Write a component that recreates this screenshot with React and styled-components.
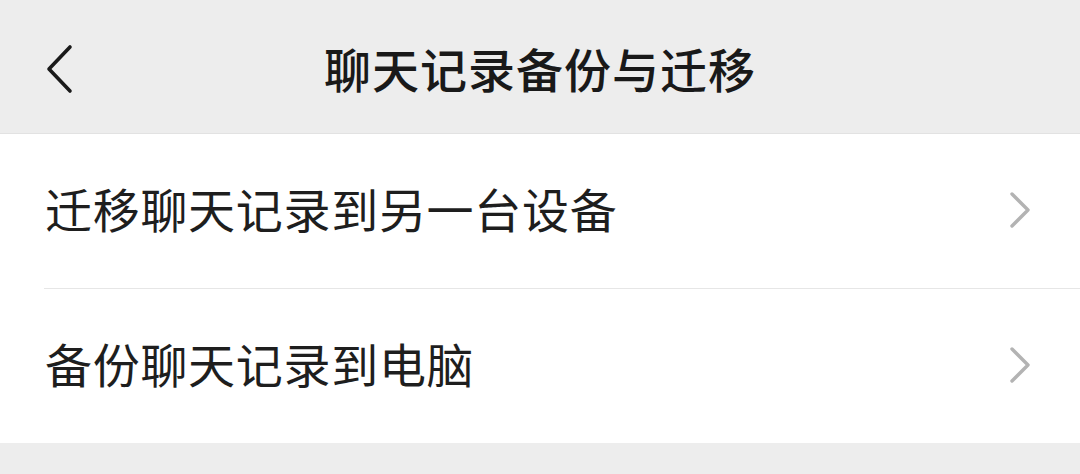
import styled, { createGlobalStyle } from "styled-components";

const GlobalStyle = createGlobalStyle`
  html, body {
    margin: 0;
    padding: 0;
    background: #ededed;
  }
  body {
    font-family: "Noto Sans CJK SC", "Noto Sans", sans-serif;
    -webkit-font-smoothing: antialiased;
  }
`;

const Page = styled.div`
  width: 1080px;
  height: 474px;
  background: #ededed;
  display: flex;
  flex-direction: column;
`;

const NavBar = styled.header`
  height: 133px;
  display: grid;
  grid-template-columns: 200px 1fr 200px;
  align-items: center;
  border-bottom: 1px solid #e2e2e2;
`;

const BackButton = styled.button`
  justify-self: start;
  margin-left: 44px;
  padding: 0;
  border: 0;
  background: none;
  display: flex;
  margin-top: 4px;
`;

const Title = styled.div`
  text-align: center;
  font-size: 47px;
  font-weight: 500;
  color: #191919;
  letter-spacing: 1px;
  line-height: 1;
  margin-top: 1px;
`;

const List = styled.ul`
  margin: 0;
  padding: 0;
  list-style: none;
  background: #fff;
`;

const Item = styled.li`
  height: 154px;
  display: flex;
  align-items: center;
  justify-content: space-between;
  margin-left: 44px;
  padding-right: 48px;
  border-top: ${(p) => (p.$first ? "none" : "1px solid #e6e6e6")};
`;

const Label = styled.span`
  font-size: 47px;
  color: #1e1e1e;
  letter-spacing: 0.7px;
  padding-left: 1px;
  line-height: 1;
  margin-top: -8px;
`;

const BackIcon = () => (
  <svg width="30" height="50" viewBox="0 0 30 50" fill="none">
    <path
      d="M26 3 L5 25 L26 47"
      stroke="#1a1a1a"
      strokeWidth="3.6"
      strokeLinecap="round"
      strokeLinejoin="round"
    />
  </svg>
);

const Chevron = () => (
  <svg width="24" height="40" viewBox="0 0 24 40" fill="none">
    <path
      d="M4 3 L20 19 L4 35"
      stroke="#b3b3b3"
      strokeWidth="3.4"
      strokeLinecap="round"
      strokeLinejoin="round"
    />
  </svg>
);

const entries = ["迁移聊天记录到另一台设备", "备份聊天记录到电脑"];

export default function App() {
  return (
    <>
      <GlobalStyle />
      <Page>
        <NavBar>
          <BackButton aria-label="返回">
            <BackIcon />
          </BackButton>
          <Title>聊天记录备份与迁移</Title>
          <span />
        </NavBar>
        <List>
          {entries.map((text, i) => (
            <Item key={text} $first={i === 0}>
              <Label>{text}</Label>
              <Chevron />
            </Item>
          ))}
        </List>
      </Page>
    </>
  );
}
